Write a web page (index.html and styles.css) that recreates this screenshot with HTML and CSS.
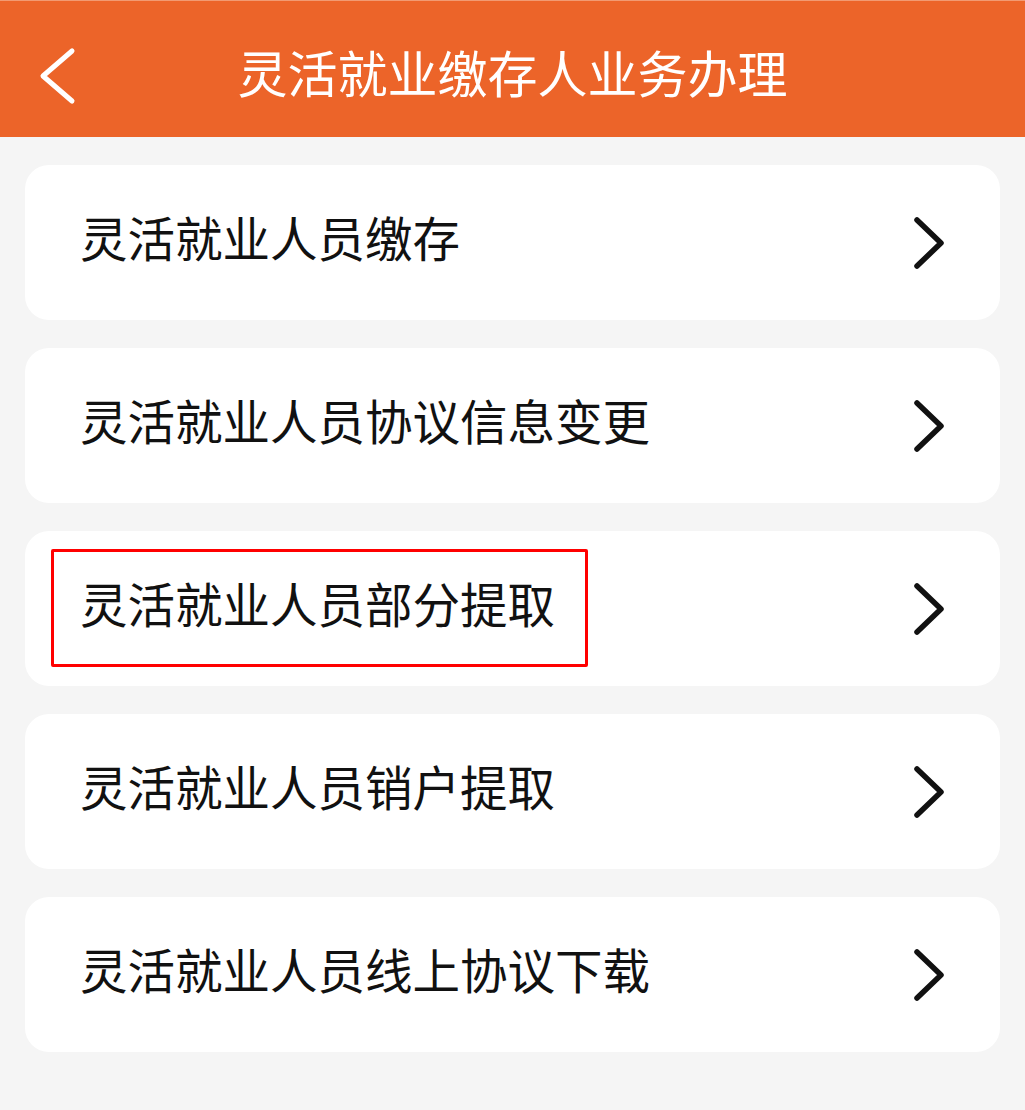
FILE: index.html
```html
<!DOCTYPE html>
<html>
  <head>
    <meta charset="UTF-8" />
    <link rel="stylesheet" href="styles.css">
  </head>
  <body>
    <div id="header">
      <div class="back">
        <svg width="50" height="60" viewBox="0 0 50 60">
          <path d="M42 5 L13 30 L42 55" fill="none" stroke="white" stroke-width="5" stroke-linecap="round" stroke-linejoin="round" />
        </svg>
      </div>
      <div class="title">灵活就业缴存人业务办理</div>
      <div></div>
    </div>
    <div id="list">
      <div class="item">
        <span class="label">灵活就业人员缴存</span>
        <svg class="arrow" width="40" height="56" viewBox="0 0 40 56">
          <path d="M9 5 L33 28 L9 51" fill="none" stroke="#111" stroke-width="5.5" stroke-linecap="round" stroke-linejoin="round" />
        </svg>
      </div>
      <div class="item">
        <span class="label">灵活就业人员协议信息变更</span>
        <svg class="arrow" width="40" height="56" viewBox="0 0 40 56">
          <path d="M9 5 L33 28 L9 51" fill="none" stroke="#111" stroke-width="5.5" stroke-linecap="round" stroke-linejoin="round" />
        </svg>
      </div>
      <div class="item">
        <span class="label marked">灵活就业人员部分提取</span>
        <svg class="arrow" width="40" height="56" viewBox="0 0 40 56">
          <path d="M9 5 L33 28 L9 51" fill="none" stroke="#111" stroke-width="5.5" stroke-linecap="round" stroke-linejoin="round" />
        </svg>
      </div>
      <div class="item">
        <span class="label">灵活就业人员销户提取</span>
        <svg class="arrow" width="40" height="56" viewBox="0 0 40 56">
          <path d="M9 5 L33 28 L9 51" fill="none" stroke="#111" stroke-width="5.5" stroke-linecap="round" stroke-linejoin="round" />
        </svg>
      </div>
      <div class="item">
        <span class="label">灵活就业人员线上协议下载</span>
        <svg class="arrow" width="40" height="56" viewBox="0 0 40 56">
          <path d="M9 5 L33 28 L9 51" fill="none" stroke="#111" stroke-width="5.5" stroke-linecap="round" stroke-linejoin="round" />
        </svg>
      </div>
    </div>
  </body>
</html>
```

FILE: styles.css
```css
body {
    margin: 0;
    background: #f5f5f5;
    font-family: "Noto Sans CJK SC", "Noto Sans", sans-serif;
    height: 1110px;
}
#header {
    display: grid;
    grid-template-columns: 100px 1fr 100px;
    align-items: center;
    height: 137px;
    padding-top: 13px;
    background: #ec6429;
    border-top: 1px solid #f29a72;
    box-sizing: border-box;
}
#header .back {
    display: flex;
    padding-left: 30px;
}
#header .title {
    text-align: center;
    color: white;
    font-size: 50px;
    line-height: 60px;
    padding-bottom: 10px;
}
#list {
    display: flex;
    flex-direction: column;
    gap: 28px;
    padding: 28px 25px;
}
.item {
    display: flex;
    align-items: center;
    justify-content: space-between;
    height: 155px;
    padding: 0 52px 0 55px;
    background: white;
    border-radius: 24px;
}
.label {
    font-size: 47.5px;
    line-height: 60px;
    color: #111;
    padding-bottom: 11px;
}
.label.marked {
    margin-left: -29px;
    padding: 21px 30px 31px 26px;
    border: 3px solid #f00;
    border-radius: 2px;
    margin-top: -2px;
}
```
